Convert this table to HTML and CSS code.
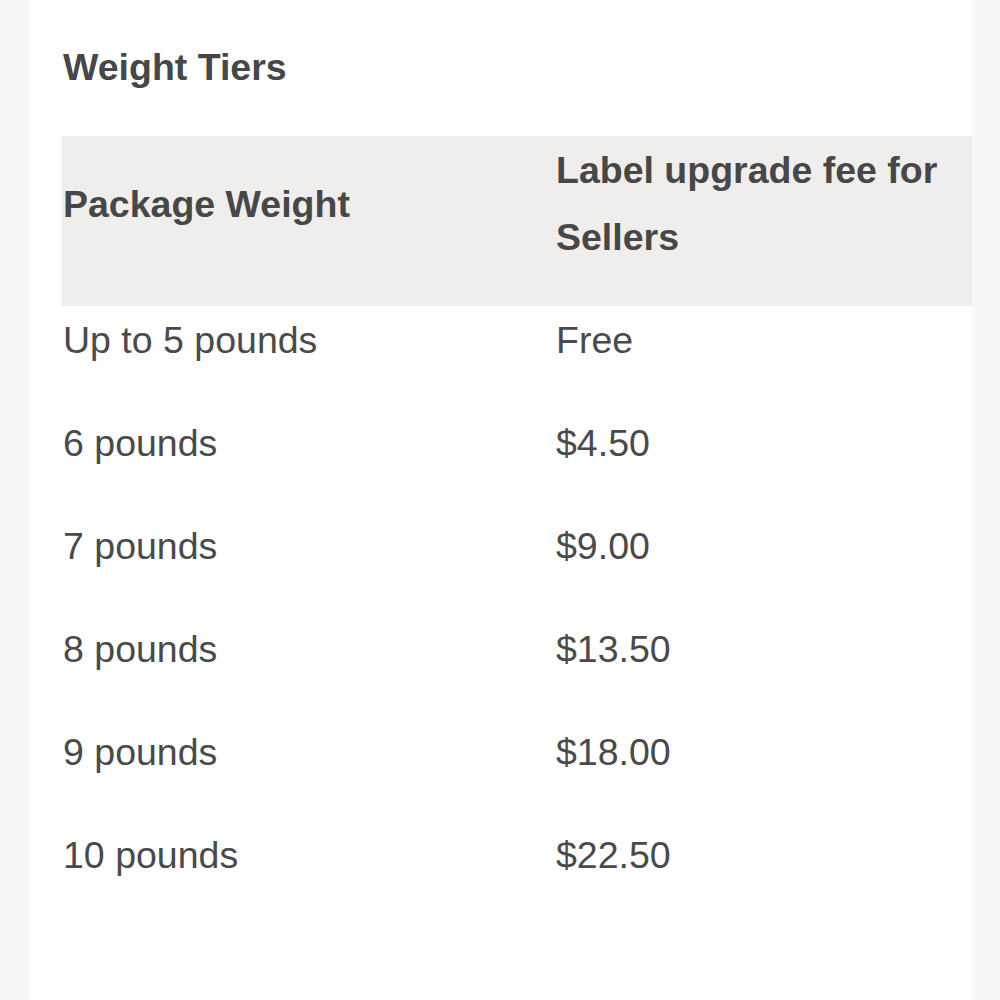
FILE: index.html
```html
<!DOCTYPE html>
<html lang="en">
<head>
<meta charset="utf-8">
<title>Weight Tiers</title>
<link rel="stylesheet" href="styles.css">
</head>
<body>
<div class="page">
  <main class="card">
    <h2 class="title">Weight Tiers</h2>
    <table class="tiers">
      <colgroup>
        <col class="col-weight">
        <col class="col-fee">
      </colgroup>
      <thead>
        <tr>
          <th>Package Weight</th>
          <th>Label upgrade fee for Sellers</th>
        </tr>
      </thead>
      <tbody>
        <tr><td>Up to 5 pounds</td><td>Free</td></tr>
        <tr><td>6 pounds</td><td>$4.50</td></tr>
        <tr><td>7 pounds</td><td>$9.00</td></tr>
        <tr><td>8 pounds</td><td>$13.50</td></tr>
        <tr><td>9 pounds</td><td>$18.00</td></tr>
        <tr><td>10 pounds</td><td>$22.50</td></tr>
      </tbody>
    </table>
  </main>
</div>
</body>
</html>
```

FILE: styles.css
```css
html, body {
  margin: 0;
  padding: 0;
  background: #f9f8f8;
}

body {
  font-family: "Liberation Sans", Arial, sans-serif;
  color: #4a4a4a;
}

.page {
  display: flex;
  min-height: 1000px;
  padding-left: 30px;
}

.card {
  width: 942px;
  min-height: 1000px;
  background: #ffffff;
  padding: 34px 0 0 32px;
  box-sizing: border-box;
}

.title {
  margin: 0;
  padding: 0 0 35px 1px;
  font-size: 37.5px;
  line-height: 67px;
  font-weight: 700;
  color: #474747;
}

.tiers {
  width: 100%;
  border-collapse: collapse;
  border-spacing: 0;
  table-layout: fixed;
}

.col-weight {
  width: 493px;
}

.tiers th,
.tiers td {
  padding: 1px 16px 35px 1px;
  font-size: 37.5px;
  line-height: 67px;
  text-align: left;
}

.tiers th {
  font-weight: 700;
  color: #474747;
  vertical-align: middle;
}

.tiers thead tr {
  background: #efeeed;
}

.tiers td {
  font-weight: 400;
  vertical-align: top;
}
```
